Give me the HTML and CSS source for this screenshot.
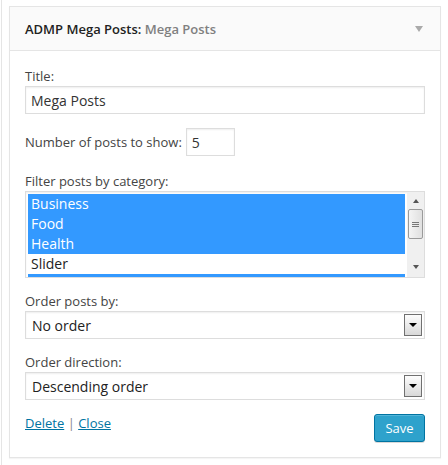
FILE: index.html
```html
<!DOCTYPE html>
<html>
<head>
<meta charset="utf-8">
<link rel="stylesheet" href="styles.css">
</head>
<body>
<div class="sidebar">
  <div class="widget">
    <div class="widget-top">
      <h4 class="widget-title">ADMP Mega Posts:<span class="in-title"> Mega Posts</span></h4>
      <span class="toggle"></span>
    </div>
    <div class="widget-inside">
      <label class="lbl">Title:</label>
      <input class="text-input" type="text" value="Mega Posts">

      <div class="number-row">
        <label class="lbl">Number of posts to show:</label>
        <input class="num-input" type="text" value="5">
      </div>

      <label class="lbl lbl-filter">Filter posts by category:</label>
      <div class="listbox">
        <div class="options">
          <div class="opt sel">Business</div>
          <div class="opt sel">Food</div>
          <div class="opt sel">Health</div>
          <div class="opt">Slider</div>
          <div class="opt sel"></div>
        </div>
        <div class="scrollbar">
          <span class="arrow-up"></span>
          <div class="thumb"><span></span><span></span><span></span></div>
          <span class="arrow-down"></span>
        </div>
      </div>

      <label class="lbl lbl-order">Order posts by:</label>
      <div class="select">
        <span class="select-text">No order</span>
        <span class="drop-btn"><span class="tri"></span></span>
      </div>

      <label class="lbl lbl-dir">Order direction:</label>
      <div class="select">
        <span class="select-text">Descending order</span>
        <span class="drop-btn"><span class="tri"></span></span>
      </div>

      <div class="actions">
        <div class="links"><a href="#">Delete</a><span class="sep"> | </span><a href="#">Close</a></div>
        <button class="save" type="button">Save</button>
      </div>
    </div>
  </div>
</div>
</body>
</html>
```

FILE: styles.css
```css
* { box-sizing: border-box; }
html, body { margin: 0; padding: 0; background: #fff; }
body {
  font-family: "Open Sans", "Liberation Sans", sans-serif;
  font-size: 13px;
  color: #444;
}
.sidebar {
  margin-left: 1px;
  border-left: 1px solid #e5e5e5;
  padding: 6px 0 0 7px;
  min-height: 465px;
}
.widget {
  width: 432px;
  border: 1px solid #e5e5e5;
  background: #fff;
  box-shadow: 0 1px 1px rgba(0,0,0,.04);
}
.widget-top {
  height: 44px;
  background: #fafafa;
  border-bottom: 1px solid #e5e5e5;
  display: flex;
  align-items: center;
  justify-content: space-between;
  padding: 0 15px;
}
.widget-title {
  margin: 0;
  font-size: 13px;
  font-weight: 600;
  color: #222;
  line-height: 20px;
}
.in-title { color: #808080; }
.toggle {
  width: 0; height: 0;
  border-left: 4px solid transparent;
  border-right: 4px solid transparent;
  border-top: 6px solid #aaa;
  margin-right: 2px;
}
.widget-inside {
  padding: 16px 15px 15px;
  display: flex;
  flex-direction: column;
}
.lbl {
  display: block;
  line-height: 18px;
  margin-bottom: 1px;
  color: #444;
}
.text-input, .num-input {
  font-family: inherit;
  font-size: 14px;
  color: #333;
  border: 1px solid #ddd;
  box-shadow: inset 0 1px 2px rgba(0,0,0,.07);
  height: 28px;
  padding: 0 5px;
  margin: 0;
  outline: none;
  background: #fff;
}
.text-input { width: 100%; }
.number-row {
  display: flex;
  align-items: center;
  gap: 4px;
  margin-top: 14px;
}
.number-row .lbl { margin: 0; }
.num-input { width: 49px; }
.lbl-filter { margin-top: 16px; }
.listbox {
  display: flex;
  height: 87px;
  border: 1px solid #ddd;
  box-shadow: inset 0 1px 2px rgba(0,0,0,.07);
  overflow: hidden;
}
.options {
  flex: 1;
  padding: 2px 2px 0 2px;
}
.opt {
  height: 20px;
  line-height: 20px;
  font-size: 14px;
  color: #222;
  padding-left: 3px;
}
.opt.sel { background: #3399ff; color: #fff; }
.scrollbar {
  width: 17px;
  background: #f0f0f0;
  display: flex;
  flex-direction: column;
  align-items: center;
}
.arrow-up, .arrow-down {
  width: 0; height: 0;
  border-left: 3px solid transparent;
  border-right: 3px solid transparent;
}
.arrow-up { border-bottom: 4px solid #555; margin-top: 7px; }
.arrow-down { border-top: 4px solid #555; margin-top: 26px; }
.thumb {
  width: 15px;
  height: 30px;
  margin-top: 6px;
  border: 1px solid #9a9a9a;
  border-radius: 2px;
  background: linear-gradient(to right, #f4f4f4, #e0e0e0);
  display: flex;
  flex-direction: column;
  align-items: center;
  justify-content: center;
  gap: 1px;
}
.thumb span {
  display: block;
  width: 7px;
  height: 1px;
  background: #777;
}
.lbl-order { margin-top: 14px; }
.lbl-dir { margin-top: 14px; }
.select {
  height: 28px;
  border: 1px solid #ddd;
  box-shadow: inset 0 1px 2px rgba(0,0,0,.07);
  display: flex;
  align-items: center;
  justify-content: space-between;
  padding: 0 2px 0 6px;
  background: #fff;
}
.select-text { font-size: 14px; color: #222; }
.drop-btn {
  width: 18px;
  height: 22px;
  border: 1px solid #707070;
  background: linear-gradient(#fdfdfd, #d8d8d8);
  display: flex;
  justify-content: center;
  padding-top: 8px;
}
.tri {
  width: 0; height: 0;
  border-left: 4px solid transparent;
  border-right: 4px solid transparent;
  border-top: 4px solid #000;
}
.actions {
  display: flex;
  justify-content: space-between;
  align-items: flex-start;
  margin-top: 14px;
}
.links { line-height: 18px; }
.links a { color: #0074a2; text-decoration: underline; }
.sep { color: #888; }
.save {
  font-family: inherit;
  font-size: 13px;
  color: #fff;
  background: #2ea2cc;
  border: 1px solid #0074a2;
  border-radius: 3px;
  box-shadow: inset 0 1px 0 rgba(120,200,230,.5), 0 1px 0 rgba(0,0,0,.15);
  height: 28px;
  width: 51px;
  padding: 0;
  margin: 0;
  cursor: pointer;
}
```
